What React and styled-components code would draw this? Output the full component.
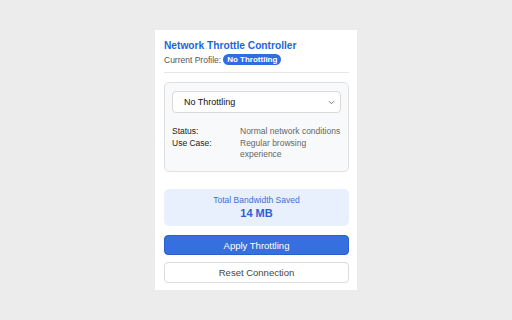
import React from 'react';
import styled, { createGlobalStyle } from 'styled-components';

const GlobalStyle = createGlobalStyle`
  html, body {
    margin: 0;
    padding: 0;
    background: #ececec;
    font-family: "Liberation Sans", Arial, sans-serif;
  }
`

const Page = styled.div`
  width: 512px;
  height: 320px;
  display: flex;
  justify-content: center;
  padding-top: 30px;
  box-sizing: border-box;
`
const Popup = styled.div`
  width: 202px;
  height: 260px;
  box-sizing: border-box;
  background: #fff;
  padding: 9px 8px 0 9px;
  display: flex;
  flex-direction: column;
`
const Header = styled.div`
  padding-bottom: 7px;
  border-bottom: 1px solid #e6e6e6;
`
const Title = styled.h1`
  margin: 0;
  font-size: 10.2px;
  font-weight: bold;
  color: #1a66e0;
  line-height: 14px;
`
const ProfileLine = styled.div`
  margin-top: 1px;
  font-size: 8.5px;
  color: #555;
  display: flex;
  align-items: center;
  gap: 2px;
`
const Badge = styled.span`
  background: #2f6de1;
  color: #fff;
  font-weight: bold;
  font-size: 8px;
  padding: 1px 4px;
  border-radius: 6px;
  line-height: 9px;
`
const Card = styled.div`
  margin-top: 9px;
  background: #f8f9fa;
  border: 1px solid #e0e0e0;
  border-radius: 5px;
  padding: 8px 7px 11px 7px;
`
const Select = styled.div`
  height: 22px;
  box-sizing: border-box;
  background: #fff;
  border: 1px solid #d9d9d9;
  border-radius: 4px;
  display: flex;
  align-items: center;
  justify-content: space-between;
  padding: 0 5px 0 11px;
  font-size: 9px;
  color: #111;
`
const InfoGrid = styled.div`
  margin-top: 13px;
  display: grid;
  grid-template-columns: 68px 1fr;
  row-gap: 1px;
  font-size: 8.5px;
  line-height: 11px;
`
const Label = styled.div`
  color: #222;
`
const Value = styled.div`
  color: #666;
`
const Stats = styled.div`
  margin-top: 17px;
  background: #e8f0fe;
  border-radius: 5px;
  height: 37px;
  display: flex;
  flex-direction: column;
  align-items: center;
  justify-content: center;
`
const StatsLabel = styled.div`
  font-size: 8.5px;
  color: #3a6fd8;
  line-height: 11px;
`
const StatsValue = styled.div`
  font-size: 11px;
  font-weight: bold;
  color: #2a62d4;
  line-height: 14px;
`
const Button = styled.button`
  margin-top: ${p => p.$gap}px;
  height: ${p => p.$primary ? 20 : 21}px;
  width: 100%;
  border-radius: 4px;
  font-family: inherit;
  font-size: 9.5px;
  cursor: pointer;
  background: ${p => p.$primary ? '#3670e0' : '#fff'};
  color: ${p => p.$primary ? '#fff' : '#444'};
  border: 1px solid ${p => p.$primary ? '#2a5fcc' : '#dcdcdc'};
`

const Chevron = () => (
  <svg width="7" height="5" viewBox="0 0 7 5">
    <path d="M1 1.2 L3.5 3.7 L6 1.2" fill="none" stroke="#666" strokeWidth="0.9" />
  </svg>
)

export default function App() {
  return (
    <Page>
      <GlobalStyle />
      <Popup>
        <Header>
          <Title>Network Throttle Controller</Title>
          <ProfileLine>
            Current Profile: <Badge>No Throttling</Badge>
          </ProfileLine>
        </Header>
        <Card>
          <Select>
            <span>No Throttling</span>
            <Chevron />
          </Select>
          <InfoGrid>
            <Label>Status:</Label>
            <Value>Normal network conditions</Value>
            <Label>Use Case:</Label>
            <Value>Regular browsing experience</Value>
          </InfoGrid>
        </Card>
        <Stats>
          <StatsLabel>Total Bandwidth Saved</StatsLabel>
          <StatsValue>14 MB</StatsValue>
        </Stats>
        <Button $primary $gap={9}>Apply Throttling</Button>
        <Button $gap={7}>Reset Connection</Button>
      </Popup>
    </Page>
  );
}
